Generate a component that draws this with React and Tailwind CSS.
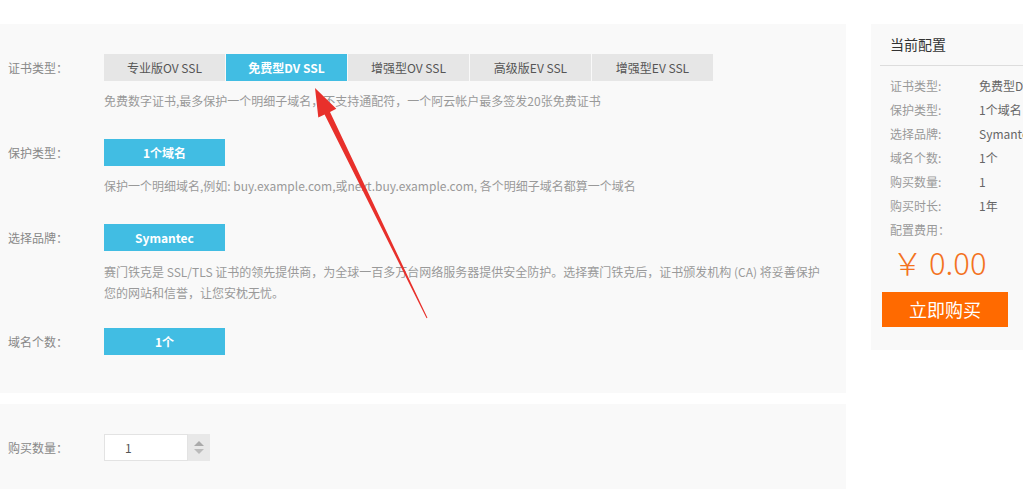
import React from "react";

const font = { fontFamily: '"Noto Sans CJK SC", "Noto Sans", "Liberation Sans", sans-serif' };

const tabs = ["专业版OV SSL", "免费型DV SSL", "增强型OV SSL", "高级版EV SSL", "增强型EV SSL"];

const summary = [
  ["证书类型:", "免费型DV SSL"],
  ["保护类型:", "1个域名"],
  ["选择品牌:", "Symantec"],
  ["域名个数:", "1个"],
  ["购买数量:", "1"],
  ["购买时长:", "1年"],
];

function Row({ label, children }) {
  return (
    <div className="flex">
      <div className="w-[104px] shrink-0 pl-[8px] h-[27px] flex items-center text-[12px] text-[#888]">{label}</div>
      <div className="flex-1">{children}</div>
    </div>
  );
}

function BlueBtn({ children }) {
  return (
    <div className="w-[121px] h-[27px] flex items-center justify-center bg-[#41bde3] text-white text-[12px] font-bold">
      {children}
    </div>
  );
}

export default function App() {
  return (
    <div className="relative w-[1023px] h-[489px] overflow-hidden bg-white pt-[24px]" style={font}>
      <div className="flex">
        {/* LEFT - options */}
        <div className="w-[846px] shrink-0">
          <div className="h-[369px] bg-[#f9f9f9] pt-[30px]">
            <Row label="证书类型：">
              <div className="flex gap-[1px]">
                {tabs.map((t, i) => (
                  <div
                    key={t}
                    className={
                      i === 1
                        ? "w-[121px] h-[27px] flex items-center justify-center bg-[#41bde3] text-white text-[12px] font-bold"
                        : "w-[121px] h-[27px] flex items-center justify-center bg-[#e6e6e6] text-[#555] text-[12px]"
                    }
                  >
                    {t}
                  </div>
                ))}
              </div>
              <p className="mt-[10px] text-[12px] leading-[20px] text-[#999]">
                免费数字证书,最多保护一个明细子域名，不支持通配符，一个阿云帐户最多签发20张免费证书
              </p>
            </Row>

            <div className="mt-[28px]">
              <Row label="保护类型：">
                <BlueBtn>1个域名</BlueBtn>
                <p className="mt-[10px] text-[12px] leading-[20px] text-[#999]">
                  保护一个明细域名,例如: buy.example.com,或next.buy.example.com, 各个明细子域名都算一个域名
                </p>
              </Row>
            </div>

            <div className="mt-[28px]">
              <Row label="选择品牌：">
                <BlueBtn>Symantec</BlueBtn>
                <p className="mt-[10px] pr-[16px] text-[12px] leading-[21px] text-[#999]">
                  赛门铁克是 SSL/TLS 证书的领先提供商，为全球一百多万台网络服务器提供安全防护。选择赛门铁克后，证书颁发机构 (CA) 将妥善保护您的网站和信誉，让您安枕无忧。
                </p>
              </Row>
            </div>

            <div className="mt-[25px]">
              <Row label="域名个数：">
                <BlueBtn>1个</BlueBtn>
              </Row>
            </div>
          </div>

          <div className="mt-[11px] h-[120px] bg-[#f9f9f9] pt-[30px]">
            <Row label="购买数量：">
              <div className="flex">
                <div className="w-[84px] h-[27px] bg-white border border-[#e3e3e3] flex items-center pl-[20px] text-[12px] text-[#555]">
                  1
                </div>
                <div className="w-[22px] h-[27px] bg-[#e8e8e8] flex flex-col items-center justify-center gap-[3px]">
                  <div className="w-0 h-0 border-l-[5px] border-r-[5px] border-b-[5px] border-l-transparent border-r-transparent border-b-[#aaa]" />
                  <div className="w-0 h-0 border-l-[5px] border-r-[5px] border-t-[5px] border-l-transparent border-r-transparent border-t-[#bbb]" />
                </div>
              </div>
            </Row>
          </div>
        </div>

        {/* RIGHT - summary */}
        <div className="ml-[25px] w-[200px] shrink-0">
          <div className="h-[326px] bg-[#f9f9f9] pl-[9px]">
            <div className="h-[42px] border-b border-[#ddd] flex items-center pl-[10px] text-[14px] text-[#333]">
              当前配置
            </div>
            <div className="mt-[8px] pl-[10px]">
              {summary.map(([k, v]) => (
                <div key={k} className="h-[24px] flex items-center text-[12px]">
                  <span className="w-[89px] text-[#999]">{k}</span>
                  <span className="text-[#666]">{v}</span>
                </div>
              ))}
              <div className="h-[24px] flex items-center text-[12px] text-[#999]">配置费用：</div>
              <div className="h-[40px] flex items-center pl-[2px] text-[31px] text-[#f3731f] font-light">
                <span>￥</span>
                <span className="ml-[6px]">0.00</span>
              </div>
            </div>
            <div className="mt-[10px] w-[126px] h-[35px] bg-[#ff6a00] flex items-center justify-center text-white text-[18px] ml-[2px]">
              立即购买
            </div>
          </div>
        </div>
      </div>

      {/* red annotation arrow */}
      <svg className="absolute left-0 top-0 pointer-events-none" width="1023" height="489">
        <polygon
          points="315,88 336.3,108.8 330,111.9 427.45,317.8 426.55,318.2 324.6,114.5 318.3,117.6"
          fill="#e8302b"
        />
      </svg>
    </div>
  );
}
